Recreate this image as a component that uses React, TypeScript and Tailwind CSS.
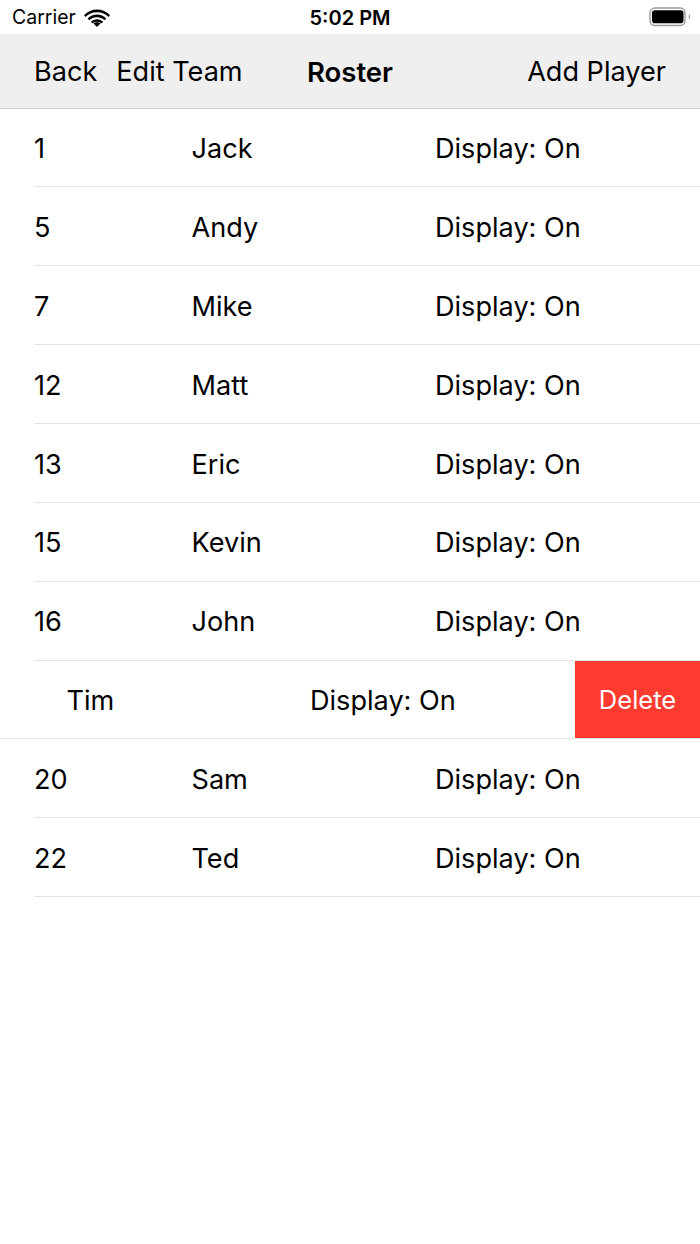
const rows = [
  ["1", "Jack"],
  ["5", "Andy"],
  ["7", "Mike"],
  ["12", "Matt"],
  ["13", "Eric"],
  ["15", "Kevin"],
  ["16", "John"],
];
const after = [
  ["20", "Sam"],
  ["22", "Ted"],
];

function Row({ n, name }: { n: string; name: string }) {
  return (
    <div className="pl-[34px]">
      <div className="flex h-[78.87px] items-center border-b border-[#e3e3e5] pt-[4px] text-[27.1px] text-black">
        <div className="w-[157.5px]">{n}</div>
        <div className="w-[243.5px]">{name}</div>
        <div>Display: On</div>
      </div>
    </div>
  );
}

export default function App() {
  return (
    <div className="flex h-[1244px] w-[700px] flex-col overflow-hidden bg-white font-['Inter','Liberation_Sans',sans-serif]">
      <div className="relative flex h-[34px] items-center justify-between pl-3 pr-[9px] pt-[2px]">
        <div className="flex items-center gap-[8px]">
          <span className="text-[19.500px] text-black">Carrier</span>
          <svg width="26" height="19" viewBox="0 0 26 19">
            <path d="M13 3.2C17.6 3.2 21.6 5 24.6 8L26 6.2C22.5 2.6 18 .6 13 .6S3.5 2.6 0 6.2L1.4 8C4.4 5 8.4 3.2 13 3.2Z" fill="#000" />
            <path d="M13 8.2c3 0 5.600 1.200 7.600 3.100l1.700-1.900C19.800 7 16.600 5.500 13 5.500S6.200 7 3.700 9.400l1.700 1.900C7.400 9.400 10 8.200 13 8.200Z" fill="#000" />
            <path d="M13 12.800c1.800 0 3.200.7 4.400 1.800l1.700-1.900C17.500 11.200 15.400 10.200 13 10.200s-4.500 1-6.100 2.500l1.700 1.900c1.200-1.100 2.600-1.800 4.400-1.800Z" fill="#000" />
            <path d="M13 18l3.500-3.400c-.9-.8-2.100-1.300-3.500-1.300s-2.600.5-3.500 1.300Z" fill="#000" />
          </svg>
        </div>
        <span className="absolute left-0 right-0 text-center text-[20px] font-semibold text-black">5:02 PM</span>
        <svg width="42" height="20" viewBox="0 0 42 20" className="mb-[2px]">
          <rect x="1" y="1" width="35" height="17.500" rx="4.800" fill="none" stroke="#9a9a9a" strokeWidth="1.400" />
          <rect x="3" y="3.200" width="31.500" height="13" rx="2.800" fill="#000" />
          <path d="M39.800 7v5.500c.9-.3 1.400-1.400 1.400-2.700S40.700 7.300 39.800 7Z" fill="#9a9a9a" />
        </svg>
      </div>
      <div className="relative flex h-[74.5px] items-center justify-between border-b border-[#cfcfd1] bg-[#efefef] pl-[34px] pr-[34px] pt-[3px] text-[27.1px] text-black">
        <div className="flex gap-[19px]">
          <span>Back</span>
          <span>Edit Team</span>
        </div>
        <span className="absolute left-0 right-0 text-center text-[27.500px] font-semibold">Roster</span>
        <span className="pl-px">Add Player</span>
      </div>
      {rows.map(([n, name]) => (
        <Row key={n} n={n} name={name} />
      ))}
      <div className="flex h-[78.87px] items-stretch overflow-hidden border-b border-[#e3e3e5] text-[27.1px] text-black">
        <div className="flex flex-1 items-center pl-[66.5px] pt-[3px]">
          <div className="w-[243.5px]">Tim</div>
          <div>Display: On</div>
        </div>
        <div className="flex w-[125px] items-center justify-center bg-[#ff3b30] pt-px text-[25.500px] text-white">Delete</div>
      </div>
      {after.map(([n, name]) => (
        <Row key={n} n={n} name={name} />
      ))}
    </div>
  );
}
